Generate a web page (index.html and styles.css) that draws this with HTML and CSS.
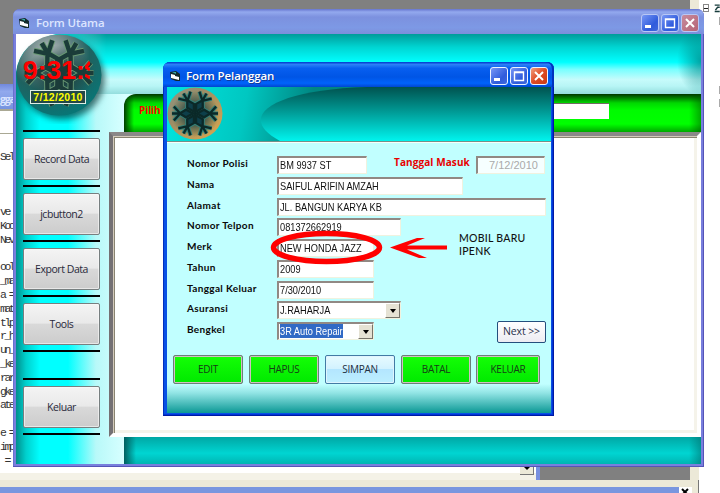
FILE: index.html
```html
<!DOCTYPE html>
<html lang="id">
<head>
<meta charset="utf-8">
<title>Form Pelanggan</title>
<link rel="stylesheet" href="styles.css">
</head>
<body>
<svg class="defs" width="0" height="0">
  <defs>
    <radialGradient id="glass" cx="38%" cy="22%" r="80%"><stop offset="0" stop-color="#b9c0c0"/><stop offset=".3" stop-color="#6f8a8a"/><stop offset=".6" stop-color="#1f6260"/><stop offset="1" stop-color="#087676"/></radialGradient>
    <linearGradient id="gold" x1="0" y1="0" x2="1" y2="1"><stop offset="0" stop-color="#8b9687"/><stop offset=".35" stop-color="#9b8d66"/><stop offset="1" stop-color="#dfa84c"/></linearGradient>
    <radialGradient id="dark" cx="50%" cy="50%" r="50%"><stop offset="0" stop-color="#081818"/><stop offset=".5" stop-color="#204846" stop-opacity=".7"/><stop offset="1" stop-color="#204846" stop-opacity="0"/></radialGradient>
    <linearGradient id="oval" x1="0" y1="0" x2="0" y2="1"><stop offset="0" stop-color="#00524f"/><stop offset=".45" stop-color="#009994"/><stop offset="1" stop-color="#00f4ee"/></linearGradient>
    <path id="arm" d="M0-3L6-14L0-24L-6-14Z M0-24V-36 M0-23L-11-33 M0-23L11-33"/>
    <g id="flake"><use href="#arm"/><use href="#arm" transform="rotate(60)"/><use href="#arm" transform="rotate(120)"/><use href="#arm" transform="rotate(180)"/><use href="#arm" transform="rotate(240)"/><use href="#arm" transform="rotate(300)"/></g>
    <symbol id="vb" viewBox="0 0 11 11"><path d="M0 1L6 0L10 3V10L6 10L1 8Z" fill="#132b2b"/><path d="M1 3L5 4V8L1 7Z M5 5L9 6V9L5 8Z" fill="#fff"/><path d="M2 1H6V3Z" fill="#39aaa5"/></symbol>
    <symbol id="min" viewBox="0 0 16 16"><rect x="3" y="10" width="6" height="3" fill="#fff"/></symbol>
    <symbol id="max" viewBox="0 0 16 16"><path d="M3.5 4H12.5V12.5H3.5Z M3 4.5H13" fill="none" stroke="#fff" stroke-width="1.4"/></symbol>
    <symbol id="close" viewBox="0 0 16 16"><path d="M4 4L12 12M12 4L4 12" stroke="#fff" stroke-width="2"/></symbol>
  </defs>
</svg>
<main class="desktop">
  <section class="code-window">
    <div class="code-title">gga</div>
    <div class="code-tools"></div>
    <pre class="code">
Sel



ve
Koo
Nev

ool
_ma
a =
mat
tlp
r_h
un_
_ke
rar
gke
ate

e =
imp
 =</pre>
    <div class="code-scroll"><i class="scroll-down"></i></div>
  </section>
  <section class="explorer">
    <div class="node"><i class="box"></i><svg width="8" height="12" viewBox="0 0 8 12"><path d="M1 2H8M2 9L5 5H8M1 11H8" stroke="#173c3c" stroke-width="2" fill="none"/></svg></div>
    <i class="stub"></i><i class="stub low"></i><i class="stub lower"></i>
  </section>
  <section class="bottom-panel"><div class="panel-bar"><svg width="13" height="6" viewBox="0 0 13 6"><path d="M0 0H13V6H0Z" fill="#fff"/><path d="M3 2L8 7M9 2L4 7" stroke="#000" stroke-width="2"/></svg></div></section>

  <section class="window main">
    <header class="titlebar">
      <svg class="app"><use href="#vb"/></svg><h1>Form Utama</h1>
      <span class="controls"><i class="ctl"><svg><use href="#min"/></svg></i><i class="ctl"><svg><use href="#max"/></svg></i><i class="ctl x"><svg><use href="#close"/></svg></i></span>
    </header>
    <div class="main-body">
      <div class="top-band"></div>
      <div class="side">
        <div class="rule"></div><button>Record Data</button>
        <div class="rule"></div><button>jcbutton2</button>
        <div class="rule"></div><button>Export Data</button>
        <div class="rule"></div><button>Tools</button>
        <div class="rule"></div><div class="space"></div>
        <div class="rule"></div><button>Keluar</button>
        <div class="rule"></div>
      </div>
      <div class="content">
        <div class="search"><span>Pilih</span><div class="query"></div></div>
        <div class="canvas"></div>
        <div class="foot"></div>
      </div>
      <div class="clock">
        <svg width="94" height="90" viewBox="0 0 94 90"><path d="M0 0H40Q4 8 0 38Z" fill="#fff"/><ellipse class="ball" cx="43" cy="41" rx="42.5" ry="40.5" fill="url(#glass)"/><ellipse cx="44" cy="41" rx="34" ry="30" fill="url(#dark)"/><g transform="translate(43 39) rotate(30) scale(.96)" fill="none"><use href="#flake" stroke="#6a9a74" stroke-width="6.5"/><use href="#flake" stroke="#1b3c39" stroke-width="4.6"/></g></svg>
        <div class="time"><span>9:31:</span><svg width="5" height="20" viewBox="0 0 5 20"><path d="M5 2L1 7L5 10M0 15L5 18" stroke="#f00" stroke-width="3" fill="none"/></svg></div><div class="date">7/12/2010</div>
      </div>
    </div>
  </section>

  <section class="window dialog">
    <header class="titlebar">
      <svg class="app"><use href="#vb"/></svg><h1>Form Pelanggan</h1>
      <span class="controls"><i class="ctl"><svg><use href="#min"/></svg></i><i class="ctl"><svg><use href="#max"/></svg></i><i class="ctl x"><svg><use href="#close"/></svg></i></span>
    </header>
    <div class="dialog-body">
      <div class="banner">
        <svg width="384" height="54" viewBox="0 0 384 54"><path d="M113 54C68 30 104 3 200 0H384V54Z" fill="url(#oval)"/><ellipse cx="28" cy="26.5" rx="27.5" ry="26" fill="url(#gold)"/><ellipse cx="28" cy="27" rx="24" ry="23" fill="url(#dark)"/><g transform="translate(28 26.5) rotate(30) scale(.64)"><use href="#flake" fill="#062222" stroke="#338078" stroke-width="6.5"/><use href="#flake" fill="#0d3f4a" stroke="#0b2928" stroke-width="3.6"/></g></svg>
      </div>
      <div class="form">
        <div class="row"><label>Nomor Polisi</label><div class="field w89"><span>BM 9937 ST</span></div><label class="entry-label">Tanggal Masuk</label><div class="field muted"><span>7/12/2010</span></div></div>
        <div class="row"><label>Nama</label><div class="field w186"><span>SAIFUL ARIFIN AMZAH</span></div></div>
        <div class="row"><label>Alamat</label><div class="field w268"><span>JL. BANGUN KARYA KB</span></div></div>
        <div class="row"><label>Nomor Telpon</label><div class="field w124"><span>081372662919</span></div></div>
        <div class="row"><label>Merk</label><div class="field w97"><span>NEW HONDA JAZZ</span></div></div>
        <div class="row"><label>Tahun</label><div class="field w97"><span>2009</span></div></div>
        <div class="row"><label>Tanggal Keluar</label><div class="field w97"><span>7/30/2010</span></div></div>
        <div class="row"><label>Asuransi</label><div class="field select w124"><span>J.RAHARJA</span><i class="drop"></i></div></div>
        <div class="row"><label>Bengkel</label><div class="field select w97"><span class="selected">3R Auto Repair</span><i class="drop"></i></div><button class="next">Next &gt;&gt;</button></div>
      </div>
      <div class="actions"><button>EDIT</button><button>HAPUS</button><button class="save">SIMPAN</button><button>BATAL</button><button class="last">KELUAR</button></div>
      <div class="annotation">
        <svg width="180" height="40" viewBox="0 0 180 40"><ellipse cx="56.5" cy="19.5" rx="53" ry="14" fill="none" stroke="#f00" stroke-width="5.5"/><path d="M120 19.5L147 10H155L137 17.5H177V21.5H137L157 30H149Z" fill="#f00"/></svg>
        <p>MOBIL BARU<br>IPENK</p>
      </div>
    </div>
  </section>
</main>
</body>
</html>
```
FILE: styles.css
```css
* { box-sizing: border-box; }
body { margin: 0; font-family: "Open Sans", sans-serif; font-size: 11px; }
button { font: inherit; padding: 0; white-space: nowrap; }
.defs { position: absolute; }
.desktop { position: relative; width: 720px; height: 493px; overflow: hidden; background: #808080; }

.code-window { position: absolute; left: 0; top: 84px; width: 540px; height: 396px; background: #fff; border-right: 4px solid #7890df; }
.code-title { height: 25px; padding: 6px 0 0; background: linear-gradient(#7188dc, #91a9ed 30%, #7593df); color: #d8e3ff; font-size: 10.5px; font-weight: bold; line-height: 18px; letter-spacing: -1.2px; }
.code-tools { height: 25px; background: #fff; border-top: 2px solid #aaa894; border-bottom: 1px solid #aaa894; }
.code { margin: 0; padding-top: 16px; font: 11.5px/13.8px "Liberation Mono", monospace; letter-spacing: -2.5px; color: #333; }
.code-scroll { position: absolute; left: 0; right: 0; bottom: 0; height: 7px; background: #f4f2e7; }
.scroll-down { position: absolute; right: 2px; top: -12px; width: 14px; height: 14px; background: #ece9d8; border: 1px solid #777; border-width: 0 1px 1px 0; display: grid; place-items: end center; padding-bottom: 4px; }
.scroll-down::after { content: ""; border: 3px solid transparent; border-top: 3px solid #000; border-bottom: 0; }
.explorer { position: absolute; left: 690px; top: 0; width: 30px; height: 493px; background: #fff; box-shadow: inset 9px 0 #ece9d8; }
.node { display: flex; align-items: center; gap: 5px; padding: 2px 0 0 13px; }
.box { width: 8px; height: 8px; border: 1px solid #888; background: linear-gradient(#222, #222) center / 4px 1px no-repeat; }
.stub { display: block; width: 4px; height: 8px; border: 1px solid #aaa; margin: 3px 0 0 29px; }
.stub.low { margin-top: 61px; }
.stub.lower { margin-top: 5px; }
.bottom-panel { position: absolute; left: 0; top: 480px; width: 699px; height: 13px; background: #ece9d8; border-right: 1px solid #777; padding-top: 7px; }
.panel-bar { display: flex; justify-content: flex-end; height: 6px; width: 692px; background: #7996df; }

.window { position: absolute; display: flex; flex-direction: column; border-radius: 7px 7px 0 0; }
.titlebar { display: flex; align-items: center; flex: none; height: 25px; }
.app { width: 11px; height: 11px; }
h1 { margin: 0; font-size: 11.5px; line-height: 20px; font-weight: 600; letter-spacing: -.1px; }
.controls { display: flex; gap: 2px; margin-left: auto; }
.ctl { display: flex; width: 18px; height: 18px; border: 1px solid #eef3ff; border-radius: 3px; background: linear-gradient(135deg, #7796f5, #2f5bdc 65%, #4168dc); }
.ctl svg { width: 16px; height: 16px; }

.main { left: 13px; top: 9px; width: 692px; width: 691px; height: 458px; padding: 0 3px 3px; background: #797fdd; box-shadow: inset -1px -1px #5554b8, inset 1px 0 #6770cf; }
.main .titlebar { margin: 0 -3px; padding: 3px 5px 0 6px; border-radius: 7px 7px 0 0; background: linear-gradient(#6675cf, #93a9ee 12%, #7c91df 32%, #7d99e5 75%, #7c8edb); }
.main h1 { margin-left: 6px; color: #dce5ff; }
.main .x { background: linear-gradient(135deg, #c68b9e, #b66375); }
.main .ctl { border-color: #b9c7f5; }
.main-body { position: relative; flex: 1; display: grid; grid-template: 60px 1fr / 93px 1fr; background: linear-gradient(90deg, #008e8c, #00d0cd 10px, #00ffff 24px, #00ffff 52px, #b8f9f9 80px, #d7ffff 108px); }
.top-band { grid-column: 1 / 3; background: radial-gradient(ellipse 24px 34px at 100% 45%, #007c7cb0, transparent), linear-gradient(#009c9a, #00d5d2 22%, #00ffff 47%, #78ffff 59%, #c7fbfb 76%, #b7f5f5 87%, #94dddd); -webkit-mask-image: linear-gradient(90deg, transparent 10px, #000 90px); }
.side { padding: 36px 9px 0 7px; }
.rule { height: 2px; background: #000; margin-bottom: 6px; }
.side button { display: block; width: 77px; height: 42px; margin-bottom: 5px; border: 1px solid #777f80; border-radius: 2px; background: linear-gradient(#f4f4f4, #e9e9e9 48%, #d9d9d9 50%, #ccc); box-shadow: inset 0 0 0 1px #fafafa99; color: #29293b; font-size: 10.5px; letter-spacing: -.45px; padding-bottom: 1px; }
.space { height: 20px; }
.content { display: flex; flex-direction: column; }
.search { display: flex; align-items: flex-start; height: 38px; margin-left: 15px; border-radius: 12px 0 0; padding: 9px 92px 0 15px; background: linear-gradient(90deg, #003d00 0, transparent 10px, transparent 565px, #004b0077), linear-gradient(#003600, #00d800 9px, #00fb00 16px, #00ff00 30px, #00a800); color: #f00; font-weight: 700; }
.search span { font-size: 10px; letter-spacing: -.1px; line-height: 15px; }
.query { flex: 1; height: 16px; margin-left: 20px; background: #fff; border-top: 1px solid #706c61; }
.canvas { height: 305px; background: #fff; border: 4px solid; border-color: #8b8888 #fff #fff #747174; box-shadow: inset 1px 1px #d4cbbb, inset 2px 2px #888371, inset -3px -3px #f5f3ea; }
.foot { flex: 1; margin-left: 15px; background: linear-gradient(90deg, #005f5f, transparent 12px, transparent 565px, #00777799), linear-gradient(#00a7a4, #00d5d2 60%, #00b5b2); }
.clock { position: absolute; left: 0; top: 0; width: 94px; height: 90px; }
.ball { filter: drop-shadow(3px 4px 3px #0a3030aa); }
.time { position: absolute; left: 7px; top: 21px; display: flex; align-items: center; width: 72px; height: 30px; color: #f00; font: bold 26.5px/30px "Liberation Sans", sans-serif; white-space: nowrap; }
.date { position: absolute; left: 14px; top: 56px; width: 56px; height: 14px; border: 1px solid #e1eee5; color: #ff0; background: #234846; font: bold 10.5px/12px "Liberation Sans", sans-serif; text-align: center; letter-spacing: .3px; }

.dialog { left: 163px; top: 62px; width: 391px; height: 354px; padding: 0 3px 3px 4px; background: #0751e5; box-shadow: inset -1px -1px #001aa4, inset 1px 0 #0030bd, inset -2px -2px #0035d6; }
.dialog .titlebar { margin: 0 -3px 0 -4px; padding: 3px 6px 0 7px; border-radius: 7px 7px 0 0; background: linear-gradient(#0036cb, #2a80f7 10%, #075ff0 25%, #0055e5 60%, #0063fb 85%, #0046cf); box-shadow: inset -2px 0 #0032bd; }
.dialog h1 { margin-left: 5px; color: #fff; text-shadow: 1px 1px #123a9c; }
.dialog .x { background: linear-gradient(135deg, #f0a080, #df4b24 50%, #cb3914); }
.dialog-body { position: relative; flex: 1; background: linear-gradient(#c1ffff 0 297px, #91e4e4 306px, #0b9895 326px); }
.banner { height: 56px; border-bottom: 1px solid #f8fff9; box-shadow: inset 0 -1px #758f88; background: linear-gradient(100deg, #00e5df, #00c7c1 80px, #008782 145px, #007d78); }
.banner svg { display: block; }
.form { padding: 13px 5px 0 20px; }
.row { display: flex; align-items: flex-start; height: 20.75px; }
label { width: 90px; font: 700 10px/15px Lato, sans-serif; letter-spacing: .35px; color: #090909; white-space: nowrap; }
.field { height: 18px; border: 1px solid #f0f2df; border-top: 2px solid #918984; border-left: 2px solid #918984; background: #fff; padding-left: 1px; font: 11px/14px "Liberation Sans", sans-serif; color: #111; }
.field span { display: inline-block; transform: scaleX(.84); transform-origin: 0 0; white-space: nowrap; }
.w89 { width: 90px; } .w186 { width: 186px; } .w268 { width: 269px; } .w124 { width: 124px; } .w97 { width: 97px; }
.entry-label { width: 82px; margin-left: 27px; color: #e80000; font: 700 10px/12px "Open Sans", sans-serif; letter-spacing: .1px; }
.muted { width: 69px; color: #aaa; padding-left: 11px; background: #f6ffff; }
.muted span { transform: none; }
.select { display: flex; justify-content: space-between; }
.drop { width: 15px; height: 15px; background: #e5e2d4; border: 1px solid #fff; border-color: #fff #77746b #77746b #fff; display: grid; place-items: center; flex: none; }
.drop::after { content: ""; border: 3.5px solid transparent; border-top: 4px solid #000; border-bottom: 0; }
.field .selected { color: #fff; background: #316ac5; height: 14px; flex: none; margin-right: -20px; }
.next { width: 49px; height: 22px; margin: -1px 0 0 auto; border: 1px solid #244f7d; border-radius: 2px; background: linear-gradient(#fff, #ececf2); color: #27304a; font-size: 10.5px; letter-spacing: -.1px; padding-bottom: 2px; }
.actions { display: flex; gap: 6px; padding: 12px 0 0 6px; }
.actions button { width: 70px; height: 29px; border: 1px solid #6b8078; border-radius: 2px; box-shadow: inset 0 0 0 1px #d2bfc1; background: linear-gradient(#14ff05, #00e900); font-size: 10px; letter-spacing: -.3px; color: #163c16; }
.actions .save { border-color: #427ba5; box-shadow: inset 0 0 0 1px #dff5ff; background: linear-gradient(#e7fbff, #d2f2ff 48%, #b4e6ff 50%, #bcefff); color: #222e3d; }
.actions .last { width: 64px; margin-left: -1px; }
.annotation { position: absolute; left: 103px; top: 141px; width: 260px; display: flex; }
.annotation svg { flex: none; }
.annotation p { margin: 4px 0 0 9px; font: 500 10.5px/13px Lato, sans-serif; letter-spacing: .25px; color: #111; white-space: nowrap; }
```
